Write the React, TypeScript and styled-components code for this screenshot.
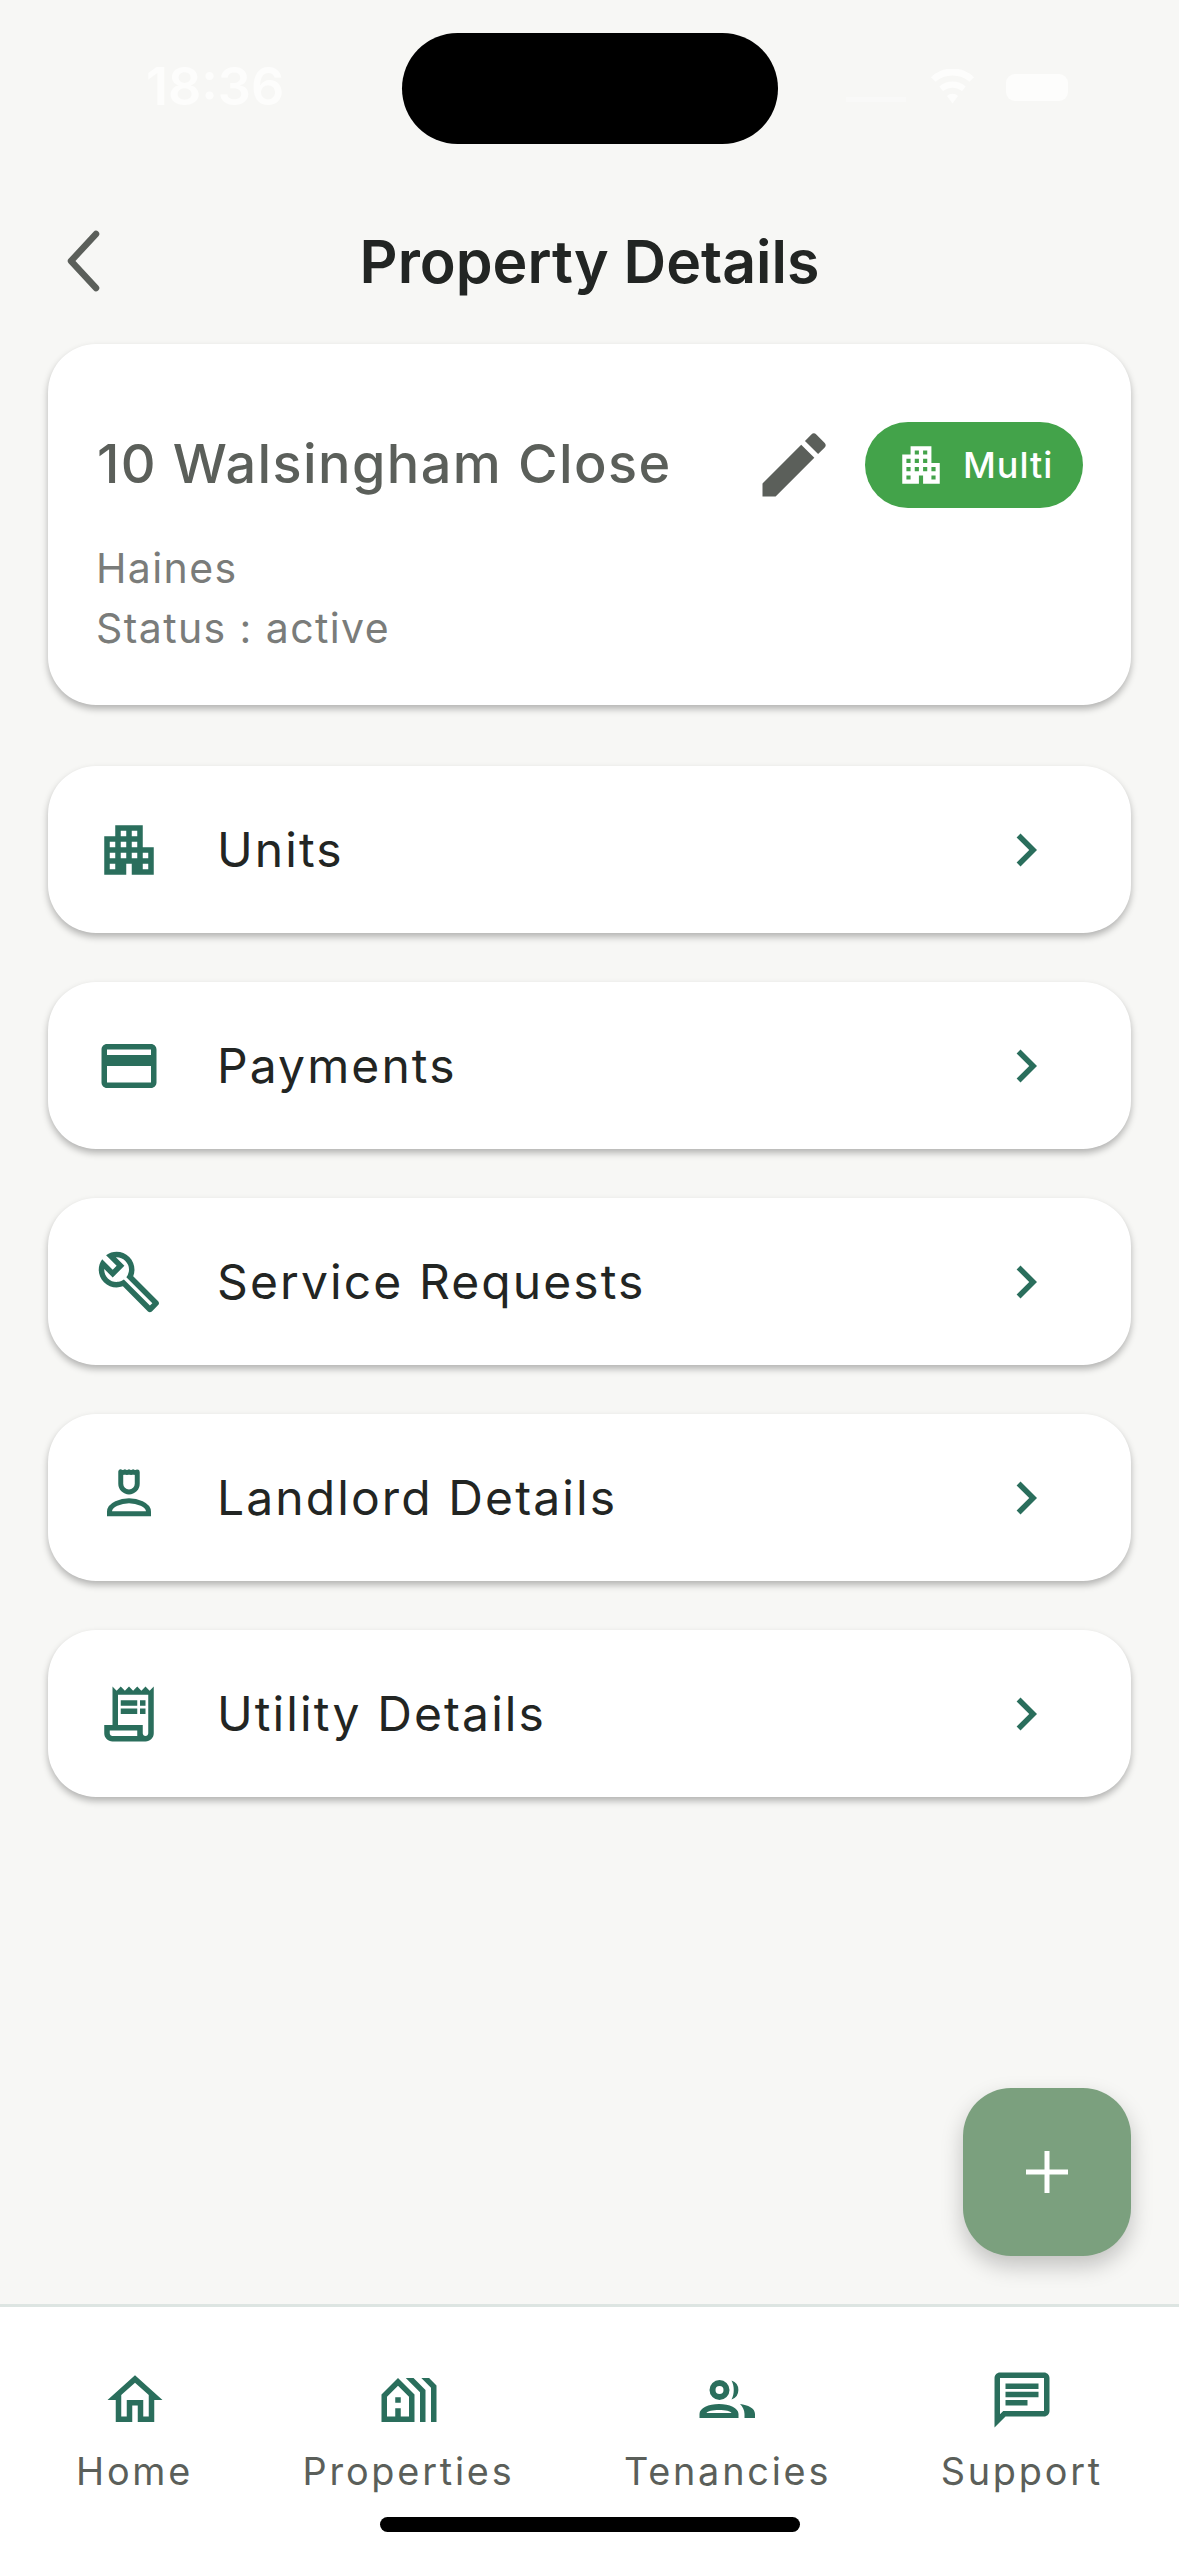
import React from "react";
import styled, { createGlobalStyle } from "styled-components";
import {
  MdApartment,
  MdChevronRight,
  MdEdit,
  MdOutlineBuild,
  MdOutlineChat,
  MdOutlineCreditCard,
  MdOutlineHolidayVillage,
  MdOutlineHome,
  MdOutlineReceiptLong,
} from "react-icons/md";

const GREEN = "#2a6e5c";

const LandlordIcon: React.FC<{ size: number }> = ({ size }) => (
  <svg width={size} height={size} viewBox="0 0 24 24" fill="none" stroke={GREEN} strokeWidth="1.8" strokeLinejoin="round">
    <path d="M9 2.500v4.300a3 3 0 0 0 6 0V2.500c-.5.300-1 .300-1.500 0-.5.300-1 .300-1.500 0-.5.300-1 .300-1.500 0-.5.300-1 .300-1.500 0z" />
    <path d="M4.900 17.700v-.7c0-2.600 4.300-4 7.100-4s7.100 1.400 7.100 4v.7z" strokeLinejoin="miter" />
  </svg>
);

const TenanciesIcon: React.FC<{ size: number }> = ({ size }) => (
  <svg width={size} height={size} viewBox="0 0 66 66" fill={GREEN}>
    <g transform="translate(4.500 13)">
      <path fillRule="evenodd" d="M20 0a10 10 0 1 1 0 20 10 10 0 0 1 0-20zm0 6a4 4 0 1 0 0 8 4 4 0 0 0 0-8z" />
      <path d="M32 .5a10 10 0 0 1 0 19c3-5.500 3-13.500 0-19z" />
      <path fillRule="evenodd" d="M0 38v-4c0-6 9-10 19.500-10s19.500 4 19.500 10v4zM7 33h25c-1-2-6-3-12.500-3S8 31 7 33z" />
      <path d="M40.500 24c8 1 15 4 15 10v4H45v-4c0-4-2-7.500-4.500-10z" />
    </g>
  </svg>
);

const menuItems = [
  { label: "Units", icon: <MdApartment size={66} color={GREEN} /> },
  { label: "Payments", icon: <MdOutlineCreditCard size={66} color={GREEN} /> },
  { label: "Service Requests", icon: <MdOutlineBuild size={66} color={GREEN} /> },
  { label: "Landlord Details", icon: <LandlordIcon size={66} /> },
  { label: "Utility Details", icon: <MdOutlineReceiptLong size={66} color={GREEN} /> },
];

const navItems = [
  { label: "Home", icon: <MdOutlineHome size={66} color={GREEN} /> },
  { label: "Properties", icon: <MdOutlineHolidayVillage size={66} color={GREEN} /> },
  { label: "Tenancies", icon: <TenanciesIcon size={66} /> },
  { label: "Support", icon: <MdOutlineChat size={66} color={GREEN} /> },
];

const App: React.FC = () => {
  return (
    <Screen>
      <GlobalStyle />
      <StatusBar>
        <Clock>18:36</Clock>
        <Island />
        <StatusIcons>
          <svg width="60" height="8" viewBox="0 0 60 8" fill="#f9f9f8">
            <path d="M0 2h60v5H0z" />
          </svg>
          <svg width="47" height="37" viewBox="0 0 50 38" fill="#fdfdfc">
            <path d="M25 36l-6-8a9 9 0 0 1 12 0zM15 23l-4-5a21 21 0 0 1 28 0l-4 5a15 15 0 0 0-20 0zM7 13L2 8a33 33 0 0 1 46 0l-5 5a27 27 0 0 0-36 0z" />
          </svg>
          <Battery />
        </StatusIcons>
      </StatusBar>

      <Header>
        <BackButton>
          <svg width="40" height="62" viewBox="0 0 40 62" fill="none" stroke="#5b5f5a" strokeWidth="6.500" strokeLinecap="round" strokeLinejoin="round">
            <path d="M32 4L7 31l25 27" />
          </svg>
        </BackButton>
        <Title>Property Details</Title>
      </Header>

      <Content>
        <PropertyCard>
          <CardTop>
            <PropertyName>10 Walsingham Close</PropertyName>
            <EditIcon>
              <MdEdit size={84} color="#5b5f5a" />
            </EditIcon>
            <TypePill>
              <MdApartment size={50} color="#fff" />
              <span>Multi</span>
            </TypePill>
          </CardTop>
          <Meta>Haines</Meta>
          <Meta>Status : active</Meta>
        </PropertyCard>

        <Menu>
          {menuItems.map((item) => (
            <MenuRow key={item.label}>
              <RowIcon>{item.icon}</RowIcon>
              <RowLabel>{item.label}</RowLabel>
              <MdChevronRight size={66} color={GREEN} />
            </MenuRow>
          ))}
        </Menu>
      </Content>

      <Fab>
        <svg width="44" height="44" viewBox="0 0 44 44" fill="#fff">
          <path d="M19.500 1h5v18.500H43v5H24.500V43h-5V24.500H1v-5h18.500z" />
        </svg>
      </Fab>

      <BottomNav>
        {navItems.map((item) => (
          <NavItem key={item.label}>
            {item.icon}
            <NavLabel>{item.label}</NavLabel>
          </NavItem>
        ))}
        <HomeIndicator />
      </BottomNav>
    </Screen>
  );
};

export default App;

const GlobalStyle = createGlobalStyle`
  html, body {
    margin: 0;
    padding: 0;
    background: #f7f7f5;
  }
  * {
    box-sizing: border-box;
  }
`;

const Screen = styled.div`
  position: relative;
  width: 1179px;
  height: 2556px;
  display: flex;
  flex-direction: column;
  overflow: hidden;
  background: #f7f7f5;
  font-family: Inter, "Liberation Sans", sans-serif;
`;

const StatusBar = styled.div`
  height: 144px;
  padding-top: 33px;
  display: grid;
  grid-template-columns: 1fr 376px 1fr;
  flex-shrink: 0;
`;

const Clock = styled.div`
  padding: 24px 0 0 146px;
  font-size: 52px;
  font-weight: 600;
  line-height: 60px;
  color: #fdfdfc;
`;

const Island = styled.div`
  height: 111px;
  border-radius: 56px;
  background: #000;
`;

const StatusIcons = styled.div`
  padding: 54px 111px 0 0;
  height: 54px;
  display: flex;
  justify-content: flex-end;
  align-items: center;
  gap: 30px;

  svg:first-child {
    margin-top: 24px;
    margin-right: -7px;
  }
`;

const Battery = styled.div`
  width: 62px;
  height: 27px;
  border-radius: 9px;
  background: #fdfdfc;
`;

const Header = styled.div`
  height: 116px;
  margin: 59px 0 25px;
  padding: 0 64px;
  display: grid;
  grid-template-columns: 1fr auto 1fr;
  align-items: center;
  flex-shrink: 0;
`;

const BackButton = styled.div`
  display: flex;
  align-items: center;
`;

const Title = styled.div`
  font-size: 59px;
  font-weight: 600;
  color: #222523;
`;

const Content = styled.div`
  padding: 0 48px;
  display: flex;
  flex-direction: column;
  flex: 1;
`;

const PropertyCard = styled.div`
  height: 361px;
  padding: 78px 48px 0;
  border-radius: 48px;
  background: #fff;
  box-shadow: 0 4px 7px rgba(0, 0, 0, 0.28);
`;

const CardTop = styled.div`
  height: 86px;
  margin-bottom: 30px;
  display: flex;
  align-items: center;
`;

const PropertyName = styled.div`
  flex: 1;
  margin-top: -3px;
  padding-left: 1px;
  font-size: 54px;
  font-weight: 500;
  letter-spacing: 1.4px;
  color: #5b5f5a;
`;

const EditIcon = styled.div`
  margin-right: 29px;
  display: flex;
`;

const TypePill = styled.div`
  width: 218px;
  height: 86px;
  padding-left: 31px;
  display: flex;
  align-items: center;
  gap: 17px;
  border-radius: 43px;
  background: #43a34a;
  color: #fff;
  font-size: 36px;
  font-weight: 500;
  letter-spacing: 1px;
`;

const Meta = styled.div`
  font-size: 41px;
  line-height: 60px;
  letter-spacing: 1.4px;
  color: #7a7c7a;
`;

const Menu = styled.div`
  margin-top: 61px;
  display: flex;
  flex-direction: column;
  gap: 49px;
`;

const MenuRow = styled.div`
  height: 167px;
  padding: 0 72px 0 48px;
  display: flex;
  align-items: center;
  border-radius: 48px;
  background: #fff;
  box-shadow: 0 4px 7px rgba(0, 0, 0, 0.28);
`;

const RowIcon = styled.div`
  margin-right: 55px;
  display: flex;
`;

const RowLabel = styled.div`
  flex: 1;
  font-size: 48px;
  font-weight: 400;
  letter-spacing: 2.1px;
  color: #222523;
`;

const Fab = styled.div`
  position: absolute;
  right: 48px;
  bottom: 300px;
  width: 168px;
  height: 168px;
  display: flex;
  align-items: center;
  justify-content: center;
  border-radius: 48px;
  background: #7ba07e;
  box-shadow: 0 10px 22px rgba(0, 0, 0, 0.22);
`;

const BottomNav = styled.div`
  position: relative;
  height: 252px;
  padding: 60px 76px 0;
  display: flex;
  justify-content: space-between;
  align-items: flex-start;
  border-top: 3px solid #dde5e2;
  background: #fff;
  flex-shrink: 0;
`;

const NavItem = styled.div`
  display: flex;
  flex-direction: column;
  align-items: center;
  gap: 14px;
`;

const NavLabel = styled.div`
  font-size: 37.800px;
  line-height: 48px;
  letter-spacing: 2.800px;
  color: #5b5f5a;
`;

const HomeIndicator = styled.div`
  position: absolute;
  left: 380px;
  bottom: 24px;
  width: 420px;
  height: 15px;
  border-radius: 8px;
  background: #000;
`;
